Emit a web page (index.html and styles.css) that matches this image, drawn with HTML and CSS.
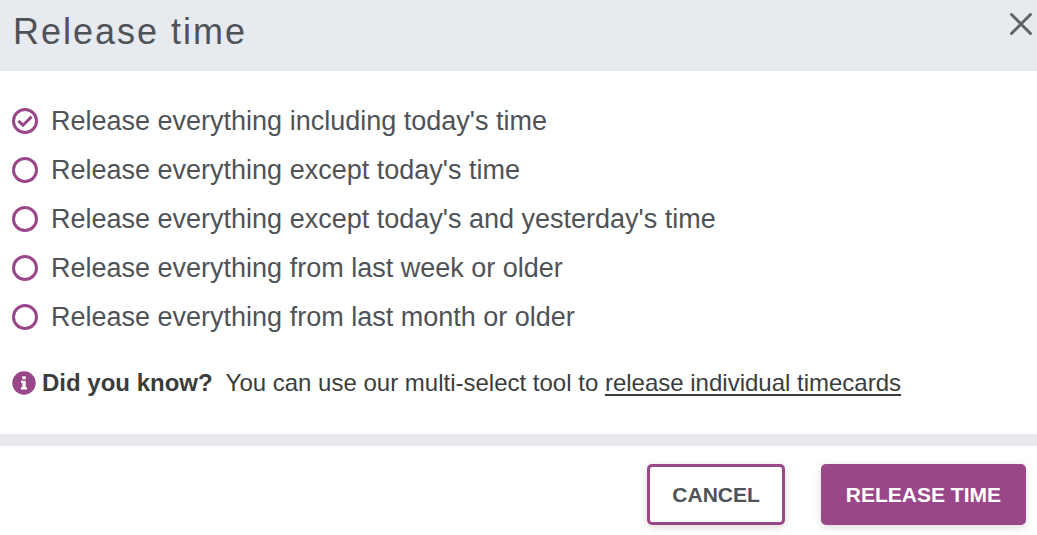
FILE: index.html
```html
<!DOCTYPE html>
<html lang="en">
<head>
  <meta charset="UTF-8">
  <meta name="viewport" content="width=device-width, initial-scale=1">
  <link rel="stylesheet" href="styles.css">
  <title>Release time</title>
</head>
<body>
<form class="modal">
  <header class="modal-header">
    <h1>Release time</h1>
    <button type="button" class="close" aria-label="Close">
      <svg viewBox="0 0 24 24" width="24" height="24"><path d="M2.5 2.5 21.5 21.5M21.5 2.5 2.5 21.5"/></svg>
    </button>
  </header>

  <div class="modal-body">
    <div class="options" role="radiogroup" aria-label="Release time">
      <div class="option">
        <span class="radio">
          <input type="radio" name="release" id="all" checked>
          <svg viewBox="0 0 26 26"><path d="M6.4 12.8 11 17.2 19.6 8.6"/></svg>
        </span>
        <label for="all">Release everything including today's time</label>
      </div>
      <div class="option">
        <span class="radio">
          <input type="radio" name="release" id="today">
          <svg viewBox="0 0 26 26"><path d="M6.4 12.8 11 17.2 19.6 8.6"/></svg>
        </span>
        <label for="today">Release everything except today's time</label>
      </div>
      <div class="option">
        <span class="radio">
          <input type="radio" name="release" id="yesterday">
          <svg viewBox="0 0 26 26"><path d="M6.4 12.8 11 17.2 19.6 8.6"/></svg>
        </span>
        <label for="yesterday">Release everything except today's and yesterday's time</label>
      </div>
      <div class="option">
        <span class="radio">
          <input type="radio" name="release" id="week">
          <svg viewBox="0 0 26 26"><path d="M6.4 12.8 11 17.2 19.6 8.6"/></svg>
        </span>
        <label for="week">Release everything from last week or older</label>
      </div>
      <div class="option">
        <span class="radio">
          <input type="radio" name="release" id="month">
          <svg viewBox="0 0 26 26"><path d="M6.4 12.8 11 17.2 19.6 8.6"/></svg>
        </span>
        <label for="month">Release everything from last month or older</label>
      </div>
    </div>

    <div class="hint">
      <svg class="info" viewBox="0 0 24 24" width="24" height="24">
        <circle cx="12" cy="12" r="11.7"/>
        <path d="M10.3 5.2h3.4v3h-3.4zM9 9.8h4.7v6.4H15v2.2H9v-2.2h1.4V12H9z"/>
      </svg>
      <p><strong>Did you know?</strong>&nbsp; You can use our multi-select tool to <a href="#">release individual timecards</a></p>
    </div>
  </div>

  <footer class="modal-footer">
    <button type="button" class="btn cancel">CANCEL</button>
    <button type="submit" class="btn release">RELEASE TIME</button>
  </footer>
</form>
</body>
</html>
```
FILE: styles.css
```css
* {
  margin: 0;
  padding: 0;
  box-sizing: border-box;
}
body {
  font-family: "Liberation Sans", Arial, Helvetica, sans-serif;
  background: #fff;
  color: #4f5358;
}
.modal-header {
  display: flex;
  justify-content: space-between;
  align-items: flex-start;
  padding: 12px 4px 19px 13px;
  background: #e7eaee;
}
.modal-header h1 {
  font-size: 36px;
  line-height: 40px;
  font-weight: normal;
  letter-spacing: 2px;
}
.close {
  display: flex;
  border: none;
  background: none;
  cursor: pointer;
}
.close path {
  fill: none;
  stroke: #5f6368;
  stroke-width: 3;
  stroke-linecap: round;
}
.modal-body {
  padding: 32px 12px 35px;
}
.options {
  display: flex;
  flex-direction: column;
  gap: 13px;
}
.option {
  display: flex;
  align-items: center;
  gap: 13px;
  font-size: 27px;
  line-height: 36px;
}
.radio {
  position: relative;
  width: 26px;
  height: 26px;
}
.radio input {
  display: block;
  appearance: none;
  width: 26px;
  height: 26px;
  border: 3px solid #9a478a;
  border-radius: 50%;
}
/* tick over the circle */
.radio svg {
  position: absolute;
  inset: 0;
  display: none;
  pointer-events: none;
}
.radio input:checked + svg {
  display: block;
}
.radio path {
  fill: none;
  stroke: #9a478a;
  stroke-width: 3;
}
.hint {
  display: flex;
  align-items: center;
  gap: 6px;
  margin-top: 32px;
  font-size: 24px;
  line-height: 32px;
  color: #3b3d3d;
}
.hint .info {
  flex: none;
}
.info circle {
  fill: #9a478a;
}
.info path {
  fill: #fff;
}
.hint a {
  color: inherit;
  text-decoration: underline;
  text-decoration-thickness: 2px;
  text-underline-offset: 3px;
}
.modal-footer {
  display: flex;
  justify-content: flex-end;
  gap: 36px;
  padding: 18px 11px 10px;
  border-top: 12px solid #e8eaee;
}
.btn {
  height: 61px;
  padding: 0 22px;
  border: 3px solid #9a478a;
  border-radius: 5px;
  font-family: inherit;
  font-size: 21px;
  font-weight: bold;
  box-shadow: 0 2px 8px rgba(0, 0, 0, 0.15);
  cursor: pointer;
}
.cancel {
  background: #fff;
  color: #4f5358;
}
.release {
  background: #9a478a;
  color: #fff;
}
```
